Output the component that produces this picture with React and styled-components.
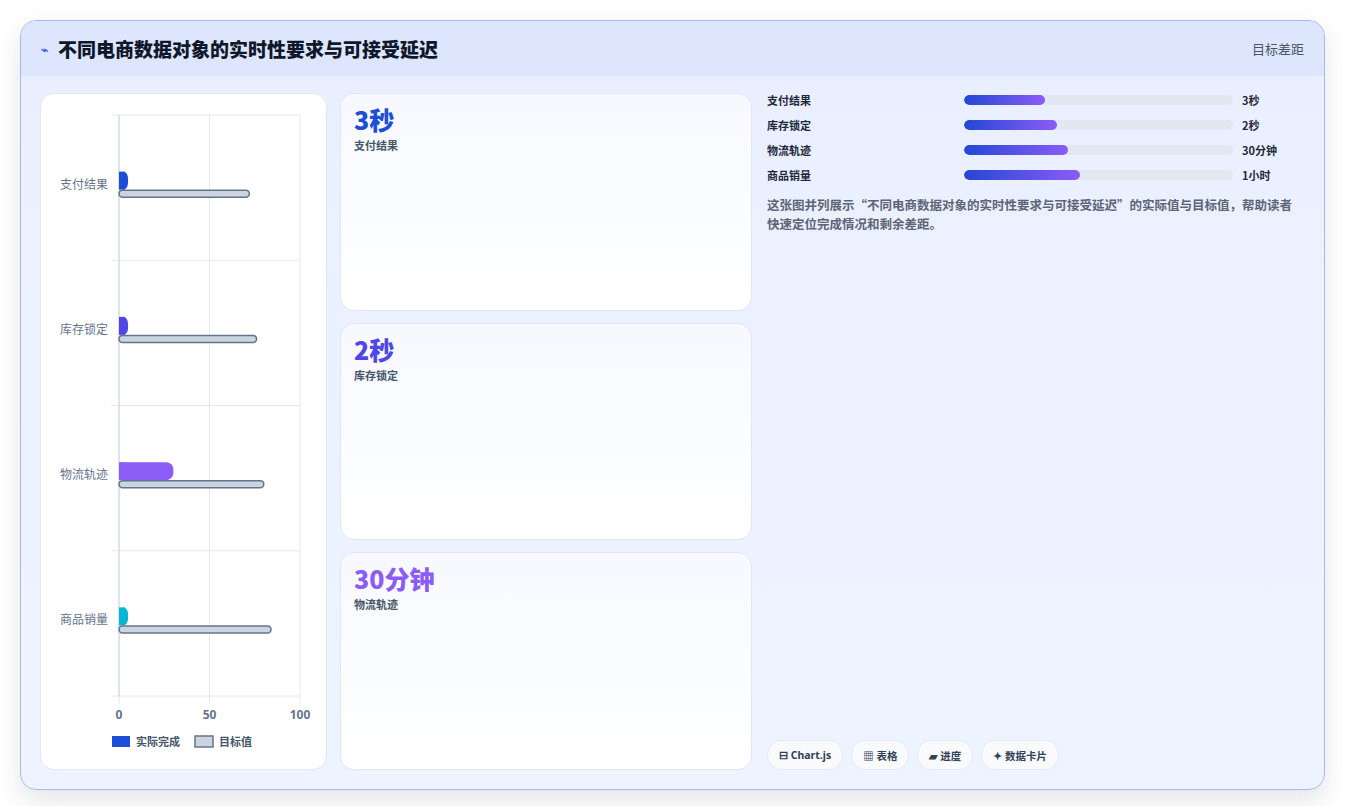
import React from "react";
import styled, { createGlobalStyle } from "styled-components";

const Global = createGlobalStyle`
  html, body { margin: 0; background: #fff; }
  body { font-family: "Noto Sans CJK SC", "Noto Sans", sans-serif; }
`;

const Page = styled.div`
  padding: 20px;
  width: 1345px;
  height: 806px;
  box-sizing: border-box;
`;
const Frame = styled.div`
  box-sizing: border-box;
  height: 770px;
  border: 1px solid #a9b8f0;
  border-radius: 16px;
  overflow: hidden;
  background: linear-gradient(180deg, #e9efff 0%, #eef4ff 100%);
  box-shadow: 0 10px 24px rgba(30, 41, 80, 0.12);
  display: flex;
  flex-direction: column;
`;
const Header = styled.div`
  height: 55px;
  flex-shrink: 0;
  background: #dde6fd;
  display: flex;
  align-items: center;
  justify-content: space-between;
  padding: 0 20px;
`;
const Title = styled.h1`
  margin: 0;
  font-size: 19px;
  font-weight: 900;
  color: #0f172a;
  display: flex;
  align-items: center;
  gap: 10px;
`;
const Icon = styled.span`
  color: #3b5bdb;
  font-size: 12px;
`;
const HeaderTag = styled.span`
  font-size: 13px;
  color: #475569;
`;
const Body = styled.div`
  flex: 1;
  display: grid;
  grid-template-columns: 287px 412px 1fr;
  gap: 13px;
  padding: 17px 19px 19px 19px;
  min-height: 0;
`;
const ChartCard = styled.div`
  background: #fff;
  border: 1px solid #e2e8f0;
  border-radius: 14px;
  overflow: hidden;
`;
const Middle = styled.div`
  display: grid;
  grid-template-rows: repeat(3, 1fr);
  gap: 12px;
  min-height: 0;
`;
const StatCard = styled.div`
  background: linear-gradient(180deg, #f7f9ff, #ffffff);
  border: 1px solid #dfe6f5;
  border-radius: 14px;
  padding: 9px 13px;
`;
const StatValue = styled.div`
  font-size: 25px;
  font-weight: 800;
  line-height: 32px;
  color: ${(p) => p.$c};
`;
const StatLabel = styled.div`
  font-size: 11px;
  font-weight: 600;
  color: #475569;
  margin-top: 2px;
`;
const Right = styled.div`
  display: flex;
  flex-direction: column;
  padding-left: 2px;
  min-height: 0;
`;
const Rows = styled.div`
  display: flex;
  flex-direction: column;
  gap: 7px;
  margin-top: -2px;
`;
const Row = styled.div`
  display: grid;
  grid-template-columns: 197px 269px 1fr;
  align-items: center;
  height: 18px;
  font-size: 11px;
  font-weight: 700;
  color: #1e293b;
`;
const Value = styled.span`
  padding-left: 9px;
`;
const Track = styled.div`
  height: 10px;
  border-radius: 5px;
  background: #e2e8f0;
  overflow: hidden;
`;
const Fill = styled.div`
  height: 100%;
  border-radius: 5px;
  background: linear-gradient(90deg, #2447d6, #8b5cf6);
`;
const Desc = styled.p`
  margin: 11px 10px 0 0;
  font-size: 12.5px;
  line-height: 19px;
  font-weight: 600;
  color: #5b6577;
`;
const Chips = styled.div`
  margin-top: auto;
  display: flex;
  gap: 8px;
`;
const Chip = styled.span`
  height: 28px;
  padding: 0 11px;
  display: flex;
  align-items: center;
  border-radius: 14px;
  background: #f8fafc;
  border: 1px solid #e5eaf3;
  font-size: 10.5px;
  font-weight: 700;
  color: #334155;
  font-family: "Noto Sans", "Noto Sans CJK SC", sans-serif;
`;

const cats = [
  { n: "支付结果", a: 5, t: 72, c: "#1d4ed8" },
  { n: "库存锁定", a: 5, t: 76, c: "#4f46e5" },
  { n: "物流轨迹", a: 30, t: 80, c: "#8b5cf6" },
  { n: "商品销量", a: 5, t: 84, c: "#06b6d4" },
];

function Chart() {
  const x0 = 78, w = 181, top = 21, h = 581, band = h / 4;
  const sx = (v) => x0 + (v / 100) * w;
  return (
    <svg width="287" height="677" viewBox="0 0 287 677">
      {[0, 50, 100].map((v) => (
        <line key={v} x1={sx(v)} x2={sx(v)} y1={top} y2={top + h + 8} stroke="#e2e8f0" />
      ))}
      {[0, 1, 2, 3, 4].map((i) => (
        <line key={i} x1={x0 - 8} x2={x0 + w} y1={top + i * band} y2={top + i * band} stroke="#e2e8f0" />
      ))}
      <line x1={x0} x2={x0} y1={top} y2={top + h} stroke="#cbd5e1" />
      {cats.map((c, i) => {
        const cy = top + band * i + band / 2 + 2;
        return (
          <g key={c.n}>
            <text x={x0 - 11} y={cy - 1} textAnchor="end" fontSize="12" fill="#64748b" fontFamily="Noto Sans CJK SC">{c.n}</text>
            <rect x={x0} y={cy - 18} width={sx(c.a) - x0} height={18} rx={7} fill={c.c} />
            <rect x={x0} y={cy - 18} width={6} height={18} fill={c.c} />
            <rect x={x0} y={cy + 0.5} width={sx(c.t) - x0} height={7} rx={3.5} fill="#cbd5e1" stroke="#64748b" strokeWidth="1.5" />
          </g>
        );
      })}
      {[0, 50, 100].map((v) => (
        <text key={v} x={sx(v)} y={top + h + 23} textAnchor="middle" fontSize="12" fontWeight="700" fill="#64748b" fontFamily="Noto Sans">{v}</text>
      ))}
      <rect x={71} y={642} width={18} height={11} fill="#1d4ed8" />
      <text x={95} y={652} fontSize="11" fontWeight="600" fill="#475569" fontFamily="Noto Sans CJK SC">实际完成</text>
      <rect x={154} y={642} width={18} height={11} fill="#cbd5e1" stroke="#64748b" strokeWidth="1.5" />
      <text x={178} y={652} fontSize="11" fontWeight="600" fill="#475569" fontFamily="Noto Sans CJK SC">目标值</text>
    </svg>
  );
}

const rows = [
  { n: "支付结果", p: 30, v: "3秒" },
  { n: "库存锁定", p: 34.5, v: "2秒" },
  { n: "物流轨迹", p: 38.5, v: "30分钟" },
  { n: "商品销量", p: 43, v: "1小时" },
];

export default function App() {
  return (
    <Page>
      <Global />
      <Frame>
        <Header>
          <Title><Icon>⌁</Icon>不同电商数据对象的实时性要求与可接受延迟</Title>
          <HeaderTag>目标差距</HeaderTag>
        </Header>
        <Body>
          <ChartCard><Chart /></ChartCard>
          <Middle>
            <StatCard><StatValue $c="#1d4ed8">3秒</StatValue><StatLabel>支付结果</StatLabel></StatCard>
            <StatCard><StatValue $c="#4f46e5">2秒</StatValue><StatLabel>库存锁定</StatLabel></StatCard>
            <StatCard><StatValue $c="#8b5cf6">30分钟</StatValue><StatLabel>物流轨迹</StatLabel></StatCard>
          </Middle>
          <Right>
            <Rows>
              {rows.map((r) => (
                <Row key={r.n}>
                  <span>{r.n}</span>
                  <Track><Fill style={{ width: `${r.p}%` }} /></Track>
                  <Value>{r.v}</Value>
                </Row>
              ))}
            </Rows>
            <Desc>这张图并列展示“不同电商数据对象的实时性要求与可接受延迟”的实际值与目标值，帮助读者快速定位完成情况和剩余差距。</Desc>
            <Chips>
              <Chip>⊟ Chart.js</Chip>
              <Chip>▦ 表格</Chip>
              <Chip>▰ 进度</Chip>
              <Chip>✦ 数据卡片</Chip>
            </Chips>
          </Right>
        </Body>
      </Frame>
    </Page>
  );
}
